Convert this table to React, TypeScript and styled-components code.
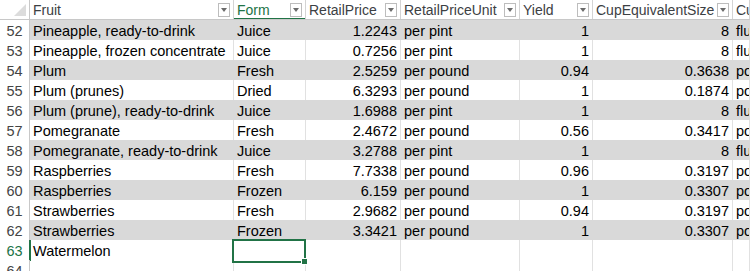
import React from "react";
import styled, {createGlobalStyle, css} from "styled-components";

const GlobalStyle = createGlobalStyle`
    html, body {
        margin: 0;
        padding: 0;
        background: #ffffff;
        overflow: hidden;
    }
`;

const COLUMNS = "30px 204px 72px 95px 119px 73px 140px 1fr";
const GREEN = "#217346";
const BAND = "#d9d9d9";
const GRID = "#e1e1e1";

type Align = "left" | "right";

type Record = {
    n: number;
    fruit: string;
    form?: string;
    price?: string;
    unit?: string;
    yieldValue?: string;
    cup?: string;
    cupUnit?: string;
};

const ROWS: Record[] = [
    {n: 52, fruit: "Pineapple, ready-to-drink", form: "Juice", price: "1.2243", unit: "per pint", yieldValue: "1", cup: "8", cupUnit: "fluid ounces"},
    {n: 53, fruit: "Pineapple, frozen concentrate", form: "Juice", price: "0.7256", unit: "per pint", yieldValue: "1", cup: "8", cupUnit: "fluid ounces"},
    {n: 54, fruit: "Plum", form: "Fresh", price: "2.5259", unit: "per pound", yieldValue: "0.94", cup: "0.3638", cupUnit: "pounds"},
    {n: 55, fruit: "Plum (prunes)", form: "Dried", price: "6.3293", unit: "per pound", yieldValue: "1", cup: "0.1874", cupUnit: "pounds"},
    {n: 56, fruit: "Plum (prune), ready-to-drink", form: "Juice", price: "1.6988", unit: "per pint", yieldValue: "1", cup: "8", cupUnit: "fluid ounces"},
    {n: 57, fruit: "Pomegranate", form: "Fresh", price: "2.4672", unit: "per pound", yieldValue: "0.56", cup: "0.3417", cupUnit: "pounds"},
    {n: 58, fruit: "Pomegranate, ready-to-drink", form: "Juice", price: "3.2788", unit: "per pint", yieldValue: "1", cup: "8", cupUnit: "fluid ounces"},
    {n: 59, fruit: "Raspberries", form: "Fresh", price: "7.7338", unit: "per pound", yieldValue: "0.96", cup: "0.3197", cupUnit: "pounds"},
    {n: 60, fruit: "Raspberries", form: "Frozen", price: "6.159", unit: "per pound", yieldValue: "1", cup: "0.3307", cupUnit: "pounds"},
    {n: 61, fruit: "Strawberries", form: "Fresh", price: "2.9682", unit: "per pound", yieldValue: "0.94", cup: "0.3197", cupUnit: "pounds"},
    {n: 62, fruit: "Strawberries", form: "Frozen", price: "3.3421", unit: "per pound", yieldValue: "1", cup: "0.3307", cupUnit: "pounds"},
    {n: 63, fruit: "Watermelon"},
];

const HEADERS = ["Fruit", "Form", "RetailPrice", "RetailPriceUnit", "Yield", "CupEquivalentSize", "CupEquivalentUnit"];

const Sheet = styled.div`
    width: 750px;
    height: 271px;
    overflow: hidden;
    background: #ffffff;
    font-family: "Liberation Sans", Arial, sans-serif;
    font-size: 14.5px;
    color: #000000;
`;

const HeaderRow = styled.div`
    display: grid;
    grid-template-columns: ${COLUMNS};
    height: 20px;
    border-bottom: 1px solid #c8c8c8;
    box-sizing: border-box;
`;

const Corner = styled.div`
    position: relative;
    border-right: 1px solid #c8c8c8;
    &::after {
        content: "";
        position: absolute;
        right: 3px;
        bottom: 3px;
        width: 0;
        height: 0;
        border-left: 12px solid transparent;
        border-bottom: 12px solid #dcdcdc;
    }
`;

const HeaderCell = styled.div<{ $active?: boolean }>`
    display: flex;
    align-items: center;
    gap: 2px;
    padding: 0 3px 0 3px;
    border-right: 1px solid #d4d4d4;
    color: ${p => p.$active ? GREEN : "#3c4043"};
    font-size: 14px;
    overflow: hidden;
    white-space: nowrap;
    position: relative;
    ${p => p.$active && css`
        &::after {
            content: "";
            position: absolute;
            left: 0;
            right: 0;
            bottom: -1px;
            height: 2px;
            background: ${GREEN};
        }
    `}
`;

const HeaderLabel = styled.span`
    flex: 1 0 auto;
    line-height: 20px;
    padding-top: 1px;
`;

const FilterButton = styled.span`
    flex: none;
    width: 10px;
    height: 12px;
    border: 1px solid #bdbdbd;
    background: #ffffff;
    display: flex;
    align-items: center;
    justify-content: center;
    &::before {
        content: "";
        width: 0;
        height: 0;
        border-left: 3.5px solid transparent;
        border-right: 3.5px solid transparent;
        border-top: 4px solid #6b6b6b;
    }
`;

const Row = styled.div<{ $last?: boolean }>`
    display: grid;
    grid-template-columns: ${COLUMNS};
    height: 20px;
    box-sizing: border-box;
    ${p => p.$last && css`border-bottom: 1px solid #000000;`}
`;

const RowNumber = styled.div<{ $active?: boolean }>`
    text-align: center;
    line-height: 20px;
    padding-top: 1px;
    box-sizing: border-box;
    color: ${p => p.$active ? GREEN : "#444444"};
    background: #ffffff;
    border-right: ${p => p.$active ? `2px solid ${GREEN}` : "1px solid #c8c8c8"};
    margin-right: ${p => p.$active ? "-1px" : "0"};
    position: relative;
    z-index: 1;
`;

const Cell = styled.div<{ $band: boolean; $align?: Align }>`
    position: relative;
    background: ${p => p.$band ? BAND : "#ffffff"};
    border-right: 1px solid ${p => p.$band ? BAND : GRID};
    text-align: ${p => p.$align ?? "left"};
    padding: 1px 3px 0 3px;
    line-height: 20px;
    white-space: nowrap;
    overflow: hidden;
`;

const Selection = styled.div`
    position: absolute;
    left: -2px;
    top: -1px;
    right: -1px;
    bottom: -2px;
    border: 2px solid ${GREEN};
    pointer-events: none;
    &::after {
        content: "";
        position: absolute;
        right: -4px;
        bottom: -4px;
        width: 5px;
        height: 5px;
        background: ${GREEN};
        border: 1px solid #ffffff;
    }
`;

const SelectedCell = styled(Cell)`
    overflow: visible;
    z-index: 2;
`;

function DataRow({r, index}: { r: Record; index: number }) {
    const band = index % 2 === 0;
    const last = r.n === 63;
    return <Row $last={last}>
        <RowNumber $active={last}>{r.n}</RowNumber>
        <Cell $band={band}>{r.fruit}</Cell>
        {last
            ? <SelectedCell $band={band}><Selection/></SelectedCell>
            : <Cell $band={band}>{r.form}</Cell>}
        <Cell $band={band} $align="right">{r.price}</Cell>
        <Cell $band={band}>{r.unit}</Cell>
        <Cell $band={band} $align="right">{r.yieldValue}</Cell>
        <Cell $band={band} $align="right">{r.cup}</Cell>
        <Cell $band={band}>{r.cupUnit}</Cell>
    </Row>;
}

export default function App() {
    return <>
        <GlobalStyle/>
        <Sheet>
            <HeaderRow>
                <Corner/>
                {HEADERS.map(h =>
                    <HeaderCell key={h} $active={h === "Form"}>
                        <HeaderLabel>{h}</HeaderLabel>
                        <FilterButton/>
                    </HeaderCell>)}
            </HeaderRow>
            {ROWS.map((r, i) => <DataRow key={r.n} r={r} index={i}/>)}
            <Row>
                <RowNumber>64</RowNumber>
                <Cell $band={false}/>
                <Cell $band={false}/>
                <Cell $band={false}/>
                <Cell $band={false}/>
                <Cell $band={false}/>
                <Cell $band={false}/>
                <Cell $band={false}/>
            </Row>
        </Sheet>
    </>;
}
